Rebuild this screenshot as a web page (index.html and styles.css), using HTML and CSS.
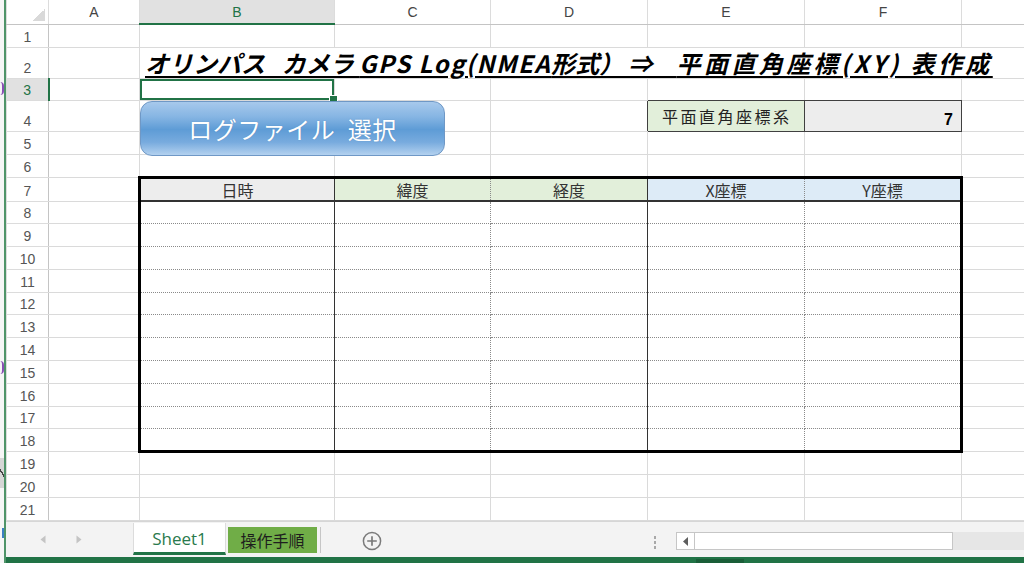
FILE: index.html
```html
<!DOCTYPE html>
<html lang="ja">
<head>
    <meta charset="UTF-8">
    <title>オリンパス カメラ GPS Log 変換</title>
    <link rel="stylesheet" href="styles.css">
</head>
<body>
    <div class="behind">
        <div class="frag frag-o1"></div>
        <div class="frag frag-o2"></div>
        <div class="frag frag-gt"><i></i></div>
        <div class="frag frag-r"></div>
    </div>

    <div class="excel">
        <div class="sheet-wrap">
            <table class="sheet">
                <colgroup>
                    <col class="w-rh"><col class="w-a"><col class="w-b"><col class="w-c">
                    <col class="w-d"><col class="w-e"><col class="w-f"><col class="w-g">
                </colgroup>
                <tr class="colhead">
                    <th class="corner"></th><th>A</th><th class="on">B</th><th>C</th><th>D</th><th>E</th><th>F</th><th></th>
                </tr>
                <tr class="r1"><th class="rh">1</th><td></td><td></td><td></td><td></td><td></td><td></td><td></td></tr>
                <tr class="r2"><th class="rh">2</th><td></td><td class="title" colspan="6"><span class="title-text">オリンパス&ensp;&thinsp;カメラ <span class="latin">GPS Log(NMEA</span>形式） ⇒　<span class="wide">平面直角座標(XY) 表作成</span></span></td></tr>
                <tr class="r3"><th class="rh on">3</th><td></td><td class="sel"></td><td></td><td></td><td class="edge-b"></td><td class="edge-b"></td><td></td></tr>
                <tr class="r4"><th class="rh">4</th><td></td><td></td><td></td><td class="edge-r"></td><td class="param">平面直角座標系</td><td class="param-val">7</td><td></td></tr>
                <tr class="r5"><th class="rh">5</th><td></td><td></td><td></td><td></td><td></td><td></td><td></td></tr>
                <tr class="r6"><th class="rh">6</th><td></td><td></td><td></td><td></td><td></td><td></td><td></td></tr>
                <tr class="r7">
                    <th class="rh">7</th><td></td>
                    <td class="d hd cb fill-gray">日時</td>
                    <td class="d hd cc fill-green">緯度</td>
                    <td class="d hd cd fill-green">経度</td>
                    <td class="d hd ce fill-blue">X座標</td>
                    <td class="d hd cf fill-blue">Y座標</td>
                    <td></td>
                </tr>
                <tr class="r"><th class="rh">8</th><td></td><td class="d cb"></td><td class="d cc"></td><td class="d cd"></td><td class="d ce"></td><td class="d cf"></td><td></td></tr>
                <tr class="r"><th class="rh">9</th><td></td><td class="d cb"></td><td class="d cc"></td><td class="d cd"></td><td class="d ce"></td><td class="d cf"></td><td></td></tr>
                <tr class="r"><th class="rh">10</th><td></td><td class="d cb"></td><td class="d cc"></td><td class="d cd"></td><td class="d ce"></td><td class="d cf"></td><td></td></tr>
                <tr class="r"><th class="rh">11</th><td></td><td class="d cb"></td><td class="d cc"></td><td class="d cd"></td><td class="d ce"></td><td class="d cf"></td><td></td></tr>
                <tr class="r"><th class="rh">12</th><td></td><td class="d cb"></td><td class="d cc"></td><td class="d cd"></td><td class="d ce"></td><td class="d cf"></td><td></td></tr>
                <tr class="r"><th class="rh">13</th><td></td><td class="d cb"></td><td class="d cc"></td><td class="d cd"></td><td class="d ce"></td><td class="d cf"></td><td></td></tr>
                <tr class="r"><th class="rh">14</th><td></td><td class="d cb"></td><td class="d cc"></td><td class="d cd"></td><td class="d ce"></td><td class="d cf"></td><td></td></tr>
                <tr class="r"><th class="rh">15</th><td></td><td class="d cb"></td><td class="d cc"></td><td class="d cd"></td><td class="d ce"></td><td class="d cf"></td><td></td></tr>
                <tr class="r"><th class="rh">16</th><td></td><td class="d cb"></td><td class="d cc"></td><td class="d cd"></td><td class="d ce"></td><td class="d cf"></td><td></td></tr>
                <tr class="r"><th class="rh">17</th><td></td><td class="d cb"></td><td class="d cc"></td><td class="d cd"></td><td class="d ce"></td><td class="d cf"></td><td></td></tr>
                <tr class="r last"><th class="rh">18</th><td></td><td class="d cb"></td><td class="d cc"></td><td class="d cd"></td><td class="d ce"></td><td class="d cf"></td><td></td></tr>
                <tr class="r"><th class="rh">19</th><td></td><td></td><td></td><td></td><td></td><td></td><td></td></tr>
                <tr class="r"><th class="rh">20</th><td></td><td></td><td></td><td></td><td></td><td></td><td></td></tr>
                <tr class="r"><th class="rh">21</th><td></td><td></td><td></td><td></td><td></td><td></td><td></td></tr>
            </table>

            <div class="btn">ログファイル&ensp;選択</div>
        </div>

        <div class="tabbar">
            <div class="nav">
                <svg width="6" height="9" viewBox="0 0 6 9"><path d="M5.5 0.5v8L0.5 4.5z" fill="#c4c4c4"/></svg>
                <svg width="6" height="9" viewBox="0 0 6 9"><path d="M0.5 0.5v8l5-4z" fill="#c4c4c4"/></svg>
            </div>
            <div class="tab tab-on">Sheet1</div>
            <div class="tab tab-green">操作手順</div>
            <div class="tab-sep"></div>
            <div class="add">
                <svg width="20" height="20" viewBox="0 0 20 20"><circle cx="10" cy="10" r="8.6" fill="none" stroke="#7a7a7a" stroke-width="1.5"/><path d="M10 5.2v9.6M5.2 10h9.6" stroke="#7a7a7a" stroke-width="1.7"/></svg>
            </div>
            <div class="dots"><i></i><i></i><i></i></div>
            <div class="hscroll">
                <div class="hs-left"><svg width="5" height="9" viewBox="0 0 5 9"><path d="M5 0v9L0 4.5z" fill="#5e5e5e"/></svg></div>
                <div class="hs-thumb"></div>
                <div class="hs-track"></div>
            </div>
        </div>

        <div class="status"><div class="status-mark"></div></div>
    </div>
</body>
</html>
```

FILE: styles.css
```css
* {
    margin: 0;
    padding: 0;
    box-sizing: border-box;
}

body {
    width: 1024px;
    height: 563px;
    overflow: hidden;
    display: flex;
    background: #fff;
    font-family: "Noto Sans CJK JP", "Noto Sans", sans-serif;
    color: #222;
}

/* edge of the window lying behind excel */
.behind {
    width: 4px;
    flex: none;
    background: #f6f6f6;
    overflow: hidden;
    display: flex;
    flex-direction: column;
}

.frag {
    width: 4px;
    flex: none;
}

.frag-o1,
.frag-o2 {
    height: 13px;
    border-right: 2px solid #8a4fb5;
    border-radius: 0 7px 7px 0;
}

.frag-o1 { margin-top: 82px; }
.frag-o2 { margin-top: 266px; }

.frag-gt {
    margin-top: 84px;
    height: 30px;
    background: #d6d6d6;
    display: flex;
    align-items: center;
}

.frag-gt i {
    width: 4px;
    height: 9px;
    background: linear-gradient(60deg, transparent 45%, #444 45%, #444 62%, transparent 62%);
}

.frag-r {
    margin-top: 40px;
    height: 10px;
    border-right: 2px solid #3d7fc4;
}

.excel {
    flex: 1;
    display: flex;
    flex-direction: column;
    border-left: 2px solid #4f9469;
}

.sheet-wrap {
    position: relative;
    height: 521px;
    overflow: hidden;
}

.sheet {
    border-collapse: collapse;
    table-layout: fixed;
    width: 1018px;
}

.w-rh { width: 42px; }
.w-a { width: 91px; }
.w-b { width: 195px; }
.w-c { width: 156px; }
.w-d { width: 157px; }
.w-e { width: 157px; }
.w-f { width: 157px; }
.w-g { width: 63px; }

td, th {
    padding: 0;
    border: 1px solid #dadada;
    font-weight: normal;
}

/* column letters */
.colhead { height: 24px; }

.colhead th {
    border-color: #dcdcdc;
    border-top: none;
    border-bottom: 1px solid #c4c4c4;
    font-family: "Liberation Sans", sans-serif;
    font-size: 14px;
    color: #444;
    vertical-align: middle;
}

.colhead th.on {
    background: #e1e1e1;
    color: #217346;
    border-bottom: 2px solid #217346;
}

.colhead th.corner {
    background: linear-gradient(135deg, transparent 50%, #d9d9d9 50%) no-repeat right 3px bottom 3px / 12px 12px;
}

/* row numbers */
.rh {
    font-family: "Liberation Sans", sans-serif;
    font-size: 14px;
    line-height: 14px;
    color: #555;
    text-align: center;
    vertical-align: bottom;
    padding-bottom: 3px;
    border-color: #dcdcdc;
    border-right: 1px solid #c4c4c4;
}

.rh.on {
    background: #e1e1e1;
    color: #217346;
    border-right: 2px solid #217346;
}

.r1 { height: 23px; }
.r2 { height: 31px; }
.r3 { height: 22px; }
.r4 { height: 31px; }
.r5 { height: 23px; }
.r6 { height: 23px; }
.r7 { height: 24px; }
.r { height: 22.8px; }

/* title */
.title {
    vertical-align: bottom;
    padding-left: 5px;
    white-space: nowrap;
}

.title-text {
    font-size: 24px;
    line-height: 1;
    font-weight: 700;
    font-style: italic;
    color: #000;
    text-decoration: underline;
    text-decoration-thickness: 2px;
    text-underline-offset: 3px;
}

.title-text .latin { letter-spacing: 1.5px; }
.title-text .wide { letter-spacing: 3.4px; }

/* active cell */
.sel {
    position: relative;
    box-shadow: inset 0 0 0 2px #217346;
}

.sel::after {
    content: "";
    position: absolute;
    right: -4px;
    bottom: -4px;
    width: 7px;
    height: 7px;
    background: #217346;
    border: 1px solid #fff;
}

/* parameter box */
.edge-b { border-bottom-color: #404040; }
.edge-r { border-right-color: #404040; }

.param {
    background: #e2efda;
    border: 1px solid #404040;
    font-size: 16px;
    letter-spacing: 2.5px;
    color: #222;
    padding-left: 14px;
    vertical-align: middle;
}

.param-val {
    background: #ededed;
    border: 1px solid #404040;
    font-family: "Liberation Sans", sans-serif;
    font-size: 16px;
    font-weight: bold;
    color: #000;
    text-align: right;
    padding-right: 8px;
    padding-bottom: 2px;
    vertical-align: bottom;
}

/* data table */
.d { border: 1px dotted #8a8a8a; }
.d.cb { border-left: 3px solid #000; border-right: 1px solid #333; }
.d.cc { border-left: 1px solid #333; }
.d.cd { border-right: 1px solid #333; }
.d.ce { border-left: 1px solid #333; }
.d.cf { border-right: 3px solid #000; }
.last .d { border-bottom: 3px solid #000; }

.hd {
    border-top: 3px solid #000;
    border-bottom: 2px solid #333;
    text-align: center;
    vertical-align: middle;
    padding-top: 2px;
    font-size: 16px;
    line-height: 1;
    color: #333;
}

.fill-gray { background: #ededed; }
.fill-green { background: #e2efda; }
.fill-blue { background: #ddebf7; }

/* macro button shape */
.btn {
    position: absolute;
    left: 134px;
    top: 101px;
    width: 305px;
    height: 55px;
    display: flex;
    align-items: center;
    justify-content: center;
    border: 1px solid #6f98c6;
    border-radius: 12px;
    background: linear-gradient(#a7c9ec 0%, #86b5e3 28%, #5e9cd6 52%, #78abde 76%, #b3d1ef 100%);
    color: #fff;
    font-size: 24px;
    letter-spacing: 0.5px;
    text-shadow: 0 0 1px rgba(40, 80, 130, 0.4);
}

/* sheet tabs */
.tabbar {
    height: 36px;
    display: flex;
    align-items: flex-start;
    background: #f3f3f3;
    border-top: 1px solid #d6d6d6;
}

.nav {
    width: 127px;
    height: 35px;
    display: flex;
    align-items: center;
    gap: 30px;
    padding-left: 34px;
}

.tab {
    display: flex;
    align-items: center;
    justify-content: center;
}

.tab-on {
    width: 93px;
    height: 32px;
    margin-top: 1px;
    background: #fff;
    border-left: 1px solid #dcdcdc;
    border-right: 1px solid #dcdcdc;
    border-bottom: 3px solid #217346;
    font-family: "Open Sans", sans-serif;
    font-size: 17px;
    color: #2a7a4d;
    padding-top: 1px;
}

.tab-green {
    width: 89px;
    height: 26px;
    margin-top: 5px;
    margin-left: 2px;
    background: #70ad47;
    font-size: 16px;
    color: #1e1e1e;
}

.tab-sep {
    width: 1px;
    height: 26px;
    margin-top: 5px;
    margin-left: 3px;
    background: #c6c6c6;
}

.add {
    width: 20px;
    height: 20px;
    margin-top: 9px;
    margin-left: 41px;
}

.add svg { display: block; }

.dots {
    width: 4px;
    margin-top: 14px;
    margin-left: 271px;
    display: flex;
    flex-direction: column;
    align-items: center;
    gap: 2px;
}

.dots i {
    width: 2px;
    height: 3px;
    background: #a8a8a8;
}

.hscroll {
    width: 348px;
    height: 18px;
    margin-top: 10px;
    margin-left: 19px;
    display: flex;
}

.hs-left {
    width: 18px;
    display: flex;
    align-items: center;
    justify-content: center;
    background: #fff;
    border: 1px solid #c6c6c6;
    border-right: none;
}

.hs-thumb {
    width: 259px;
    background: #fff;
    border: 1px solid #c6c6c6;
}

.hs-track {
    flex: 1;
    background: #e6e6e6;
}

.status {
    height: 6px;
    background: #217346;
    display: flex;
    align-items: flex-end;
}

.status-mark {
    width: 48px;
    height: 4px;
    margin-left: 690px;
    background: #1a5e38;
}
```
